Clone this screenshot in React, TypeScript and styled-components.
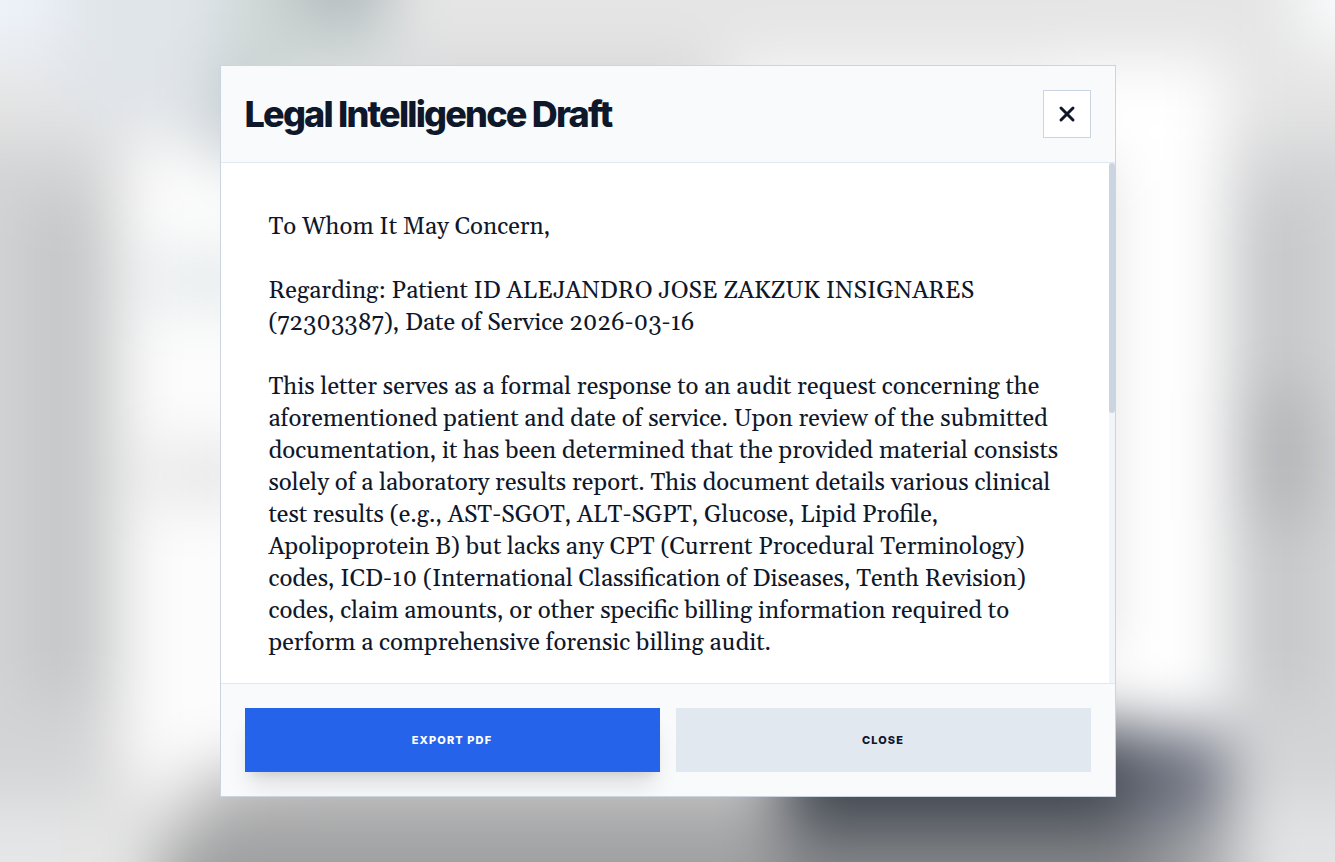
import React from "react";
import styled, { createGlobalStyle, css } from "styled-components";
import { X } from "lucide-react";

const color = {
  ink: "#0f172a",
  line: "#e2e8f0",
  edge: "#cbd5e1",
  panel: "#f8fafc",
  track: "#f1f5f9",
  blue: "#2563eb",
  white: "#ffffff",
};

const GlobalStyle = createGlobalStyle`
  *, *::before, *::after { box-sizing: border-box; }
  body { margin: 0; background: #dfe1e3; color: ${color.ink}; font-family: Inter, "Liberation Sans", sans-serif; }
`;

const Overlay = styled.main`
  display: flex;
  align-items: center;
  justify-content: center;
  height: 100vh;
  padding: 16px;
  overflow: hidden;
  isolation: isolate;
`;

const Backdrop = styled.svg`
  position: fixed;
  inset: 0;
  z-index: -1;
  width: 100%;
  height: 100%;
`;

const Dialog = styled.section`
  display: flex;
  flex-direction: column;
  width: 100%;
  max-width: 896px;
  height: 85vh;
  overflow: hidden;
  border: 1px solid ${color.edge};
  background: ${color.white};
`;

const Header = styled.header`
  display: flex;
  align-items: center;
  justify-content: space-between;
  gap: 16px;
  padding: 24px;
  border-bottom: 1px solid ${color.line};
  background: ${color.panel};
`;

const Title = styled.h1`
  margin: 0;
  font-size: 36px;
  line-height: 40px;
  font-weight: 800;
  letter-spacing: -0.05em;
`;

const IconButton = styled.button`
  display: flex;
  flex: none;
  align-items: center;
  justify-content: center;
  width: 48px;
  height: 48px;
  padding: 0;
  border: 1px solid ${color.edge};
  background: ${color.white};
  color: ${color.ink};
  cursor: pointer;
`;

const Body = styled.div`
  display: flex;
  flex: 1;
  min-height: 0;
`;

const Letter = styled.article`
  flex: 1;
  min-width: 0;
  padding: 48px;
  overflow-y: auto;
  scrollbar-width: none;
  font-family: Gelasio, Georgia, "Liberation Serif", serif;
  font-size: 24px;
  line-height: 32px;
`;

const Paragraph = styled.p`
  margin: 0 0 32px;
`;

const ScrollTrack = styled.div`
  flex: none;
  width: 6px;
  background: ${color.track};
`;

const ScrollThumb = styled.div`
  height: 48%;
  border-radius: 3px;
  background: ${color.edge};
`;

const Footer = styled.footer`
  display: grid;
  grid-template-columns: 1fr 1fr;
  gap: 16px;
  padding: 24px;
  border-top: 1px solid ${color.line};
  background: ${color.panel};
`;

const ActionButton = styled.button<{ $primary?: boolean }>`
  height: 64px;
  border: 0;
  background: ${color.line};
  color: ${color.ink};
  font-family: inherit;
  font-size: 11px;
  line-height: 16px;
  font-weight: 800;
  letter-spacing: 0.1em;
  text-transform: uppercase;
  cursor: pointer;
  ${(p) =>
    p.$primary &&
    css`
      background: ${color.blue};
      color: ${color.white};
      box-shadow: 0 20px 25px -5px rgba(0, 0, 0, 0.1), 0 8px 10px -6px rgba(0, 0, 0, 0.1);
    `}
`;

type Patch = [x: number, y: number, w: number, h: number, fill: string];

/* Out-of-focus page behind the dialog, as large soft patches. */
const softPatches: Patch[] = [
  [-100, -100, 1540, 1070, "#e5e5e5"],
  [-100, -100, 160, 160, "#edf2f9"],
  [60, -100, 180, 220, "#e0e5ea"],
  [-100, 140, 220, 660, "#d3d4d5"],
  [25, 200, 80, 500, "#c5c6c7"],
  [-100, 810, 160, 200, "#e4e6e8"],
  [120, 145, 160, 635, "#fcfcfc"],
  [150, 255, 110, 50, "#e2e8e9"],
  [150, 450, 110, 50, "#e2e2e2"],
  [215, 50, 60, 110, "#bcc6cc"],
  [225, -100, 165, 180, "#ced7d5"],
  [300, -100, 85, 120, "#b0b7bc"],
  [400, 60, 310, 70, "#d7d7da"],
  [730, 60, 420, 70, "#f6f7f6"],
  [1300, -100, 200, 150, "#fafbfc"],
  [1060, 60, 165, 670, "#ffffff"],
  [1060, 160, 46, 500, "#dadada"],
  [1230, 140, 250, 660, "#d3d4d6"],
  [1245, 200, 65, 500, "#c4c5c7"],
  [1250, 390, 65, 130, "#afb0b3"],
  [1270, 800, 200, 200, "#e2e3e5"],
  [200, 770, 600, 65, "#b2b2b3"],
  [160, 835, 640, 180, "#9d9e9f"],
  [780, 820, 410, 200, "#838689"],
  [1160, 810, 75, 200, "#a4a6a9"],
  [785, 725, 360, 100, "#40454f"],
  [1125, 730, 100, 88, "#686d7b"],
];

function BlurredPage() {
  return (
    <Backdrop viewBox="0 0 1335 862" preserveAspectRatio="none" aria-hidden="true">
      <defs>
        <filter id="soft" x="-200" y="-200" width="1735" height="1262" filterUnits="userSpaceOnUse" colorInterpolationFilters="sRGB">
          <feGaussianBlur stdDeviation="31" />
        </filter>
      </defs>
      <g filter="url(#soft)">
        {softPatches.map(([x, y, w, h, fill]) => (
          <rect key={`${x},${y}`} x={x} y={y} width={w} height={h} fill={fill} />
        ))}
      </g>
    </Backdrop>
  );
}

const paragraphs = [
  "To Whom It May Concern,",
  "Regarding: Patient ID ALEJANDRO JOSE ZAKZUK INSIGNARES (72303387), Date of Service 2026-03-16",
  "This letter serves as a formal response to an audit request concerning the aforementioned patient and date of service. Upon review of the submitted documentation, it has been determined that the provided material consists solely of a laboratory results report. This document details various clinical test results (e.g., AST-SGOT, ALT-SGPT, Glucose, Lipid Profile, Apolipoprotein B) but lacks any CPT (Current Procedural Terminology) codes, ICD-10 (International Classification of Diseases, Tenth Revision) codes, claim amounts, or other specific billing information required to perform a comprehensive forensic billing audit.",
];

export default function App() {
  return (
    <Overlay>
      <GlobalStyle />
      <BlurredPage />
      <Dialog role="dialog" aria-modal="true" aria-labelledby="draft-title">
        <Header>
          <Title id="draft-title">Legal Intelligence Draft</Title>
          <IconButton type="button" aria-label="Close dialog">
            <X size={24} strokeWidth={3} />
          </IconButton>
        </Header>
        <Body>
          <Letter tabIndex={0}>
            {paragraphs.map((text) => (
              <Paragraph key={text}>{text}</Paragraph>
            ))}
          </Letter>
          <ScrollTrack aria-hidden="true">
            <ScrollThumb />
          </ScrollTrack>
        </Body>
        <Footer>
          <ActionButton type="button" $primary>
            Export PDF
          </ActionButton>
          <ActionButton type="button">Close</ActionButton>
        </Footer>
      </Dialog>
    </Overlay>
  );
}
